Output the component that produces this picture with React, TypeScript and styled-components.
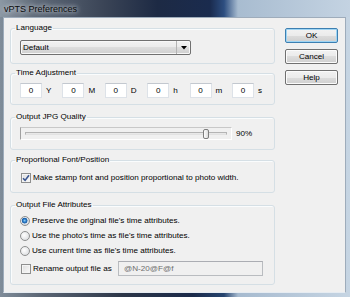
import React from 'react'
import styled, { createGlobalStyle } from 'styled-components'

const GlobalStyle = createGlobalStyle`
  html, body {
    margin: 0;
    padding: 0;
    background: #1e2a3a;
  }
  * {
    box-sizing: border-box;
  }
`

const Window = styled.div`
  width: 350px;
  height: 297px;
  display: flex;
  flex-direction: column;
  overflow: hidden;
  font-family: "Liberation Sans", Arial, sans-serif;
  font-size: 8.1px;
  color: #000;
  background: linear-gradient(to right, #7f8c99 0%, #5a6574 12%, #2c3648 35%, #1b2a4a 55%, #26446f 64%, #a6bacf 68%, #c6d5e3 100%);
`

const TitleBar = styled.div`
  height: 17px;
  flex: none;
  display: flex;
  align-items: center;
  padding-left: 4px;
  background: linear-gradient(to right, #8c98a4 0%, #5f6a78 10%, #3a4456 30%, #1d2a44 45%, #1a2b4e 60%, #2d4e80 64%, #a8bcd0 68%, #c4d3e2 100%);
`

const TitleText = styled.span`
  font-size: 9px;
  color: #0a0a0a;
  text-shadow: 0 0 4px #d0d6de, 0 0 6px #c2cad4;
`

const Frame = styled.div`
  flex: 1;
  display: flex;
  padding: 0 4px 4px 3px;
`

const Client = styled.div`
  flex: 1;
  display: flex;
  align-items: flex-start;
  gap: 10px;
  padding: 4px 7px 0 6px;
  background: #f0f0f0;
  border: 1px solid #9eacbb;
  border-bottom-color: #e6ecf2;
`

const Groups = styled.div`
  width: 265px;
  display: flex;
  flex-direction: column;
`

const Group = styled.fieldset<{ $mt?: number; $pt: number; $pb: number }>`
  margin: ${({ $mt = 0 }) => $mt}px 0 0 0;
  padding: ${({ $pt }) => $pt}px 8px ${({ $pb }) => $pb}px 9px;
  border: 1px solid #d5dfe5;
  border-radius: 3px;
  min-width: 0;
  box-shadow: inset 1px 1px 0 #fafcfd;
`

const Legend = styled.legend`
  margin-left: -5px;
  padding: 0 1px;
  line-height: 12px;
  color: #000;
`

const Combo = styled.div`
  width: 171px;
  height: 15px;
  display: flex;
  align-items: center;
  border: 1px solid #707070;
  border-radius: 2px;
  background: linear-gradient(#f2f2f2 0%, #ebebeb 50%, #dddddd 50%, #cfcfcf 100%);
  box-shadow: inset 0 0 0 1px #f8f8f8;
`

const ComboText = styled.span`
  flex: 1;
  padding-left: 2px;
`

const ComboArrow = styled.span`
  width: 14px;
  align-self: stretch;
  display: flex;
  align-items: center;
  justify-content: center;
  border-left: 1px solid #b4b4b4;
`

const TimeRow = styled.div`
  display: grid;
  grid-template-columns: repeat(6, 42.4px);
`

const TimeUnit = styled.div`
  display: flex;
  align-items: center;
  gap: 4px;
`

const NumBox = styled.span`
  width: 22px;
  height: 15px;
  line-height: 13px;
  text-align: center;
  background: #fff;
  border: 1px solid #dde2e8;
  border-top-color: #c3c8cf;
`

const SliderRow = styled.div`
  display: flex;
  align-items: center;
  gap: 4px;
`

const SliderFrame = styled.div`
  width: 212px;
  height: 13px;
  display: flex;
  align-items: center;
  padding: 0 4px;
  border: 1px solid;
  border-color: #c8c8c8 #ffffff #ffffff #a0a0a0;
`

const Track = styled.div`
  position: relative;
  flex: 1;
  height: 3px;
  border: 1px solid #b4b4b4;
  border-bottom-color: #e2e2e2;
  background: #e8e8e8;
`

const Thumb = styled.div`
  position: absolute;
  top: 50%;
  width: 6px;
  height: 10px;
  transform: translate(-50%, -50%);
  border: 1px solid #7d7d7d;
  border-radius: 2px;
  background: linear-gradient(to right, #fdfdfd, #dcdcdc);
`

const OptionRow = styled.div<{ $h?: number }>`
  height: ${({ $h = 15 }) => $h}px;
  display: flex;
  align-items: center;
  gap: 2px;
`

const CheckBox = styled.span`
  width: 10px;
  height: 10px;
  margin-left: 1px;
  display: flex;
  align-items: center;
  justify-content: center;
  border: 1px solid #8e8f8f;
  background: linear-gradient(135deg, #dcdcdc, #fbfbfb);
  box-shadow: inset 0 0 0 1px #f4f4f4;
`

const Radio = styled.span<{ $on?: boolean }>`
  width: 10px;
  height: 10px;
  border-radius: 50%;
  border: 1px solid #8e8f8f;
  background: ${({ $on }) =>
    $on
      ? 'radial-gradient(circle at 45% 45%, #8fd0f8 0, #2d7fc9 1.5px, #1c5aa2 2.6px, #e8eef4 3.2px, #d6dadf 4px)'
      : 'radial-gradient(circle at 40% 40%, #ffffff, #d4d6d9)'};
`

const OptionList = styled.div`
  display: flex;
  flex-direction: column;
`

const RenameRow = styled.div`
  margin-top: 3px;
  height: 15px;
  display: flex;
  align-items: center;
`

const Rename = styled.div`
  display: flex;
  align-items: center;
  gap: 2px;
  width: 98px;
`

const DisabledField = styled.span`
  width: 145px;
  height: 15px;
  line-height: 13px;
  padding-left: 5px;
  color: #6d6d6d;
  background: #f0f0f0;
  border: 1px solid #b9bcc0;
  border-top-color: #abadb3;
`

const Buttons = styled.div`
  width: 53px;
  margin-top: 6px;
  display: flex;
  flex-direction: column;
  gap: 6px;
`

const Button = styled.button<{ $default?: boolean }>`
  width: 53px;
  height: 15px;
  padding: 0;
  font: inherit;
  color: #000;
  border: 1px solid ${({ $default }) => ($default ? '#3c7fb1' : '#707070')};
  border-radius: 2px;
  background: linear-gradient(#f2f2f2 0%, #ebebeb 50%, #dddddd 50%, #cfcfcf 100%);
  box-shadow: inset 0 0 0 1px ${({ $default }) => ($default ? '#9fd5f4' : '#fbfbfb')};
`

const Check = () => (
  <svg width="8" height="8" viewBox="0 0 8 8">
    <path d="M1 4.3 L3.1 6.4 L7 1.2" stroke="#3a5590" strokeWidth="1.6" fill="none" />
  </svg>
)

const DownArrow = () => (
  <svg width="6" height="4" viewBox="0 0 6 4">
    <path d="M0 0 H6 L3 3.5 Z" fill="#000" />
  </svg>
)

const timeUnits = ['Y', 'M', 'D', 'h', 'm', 's']
const quality = 90

export default function App() {
  return (
    <Window>
      <GlobalStyle />
      <TitleBar>
        <TitleText>vPTS Preferences</TitleText>
      </TitleBar>
      <Frame>
        <Client>
          <Groups>
            <Group $pt={6} $pb={8}>
              <Legend>Language</Legend>
              <Combo>
                <ComboText>Default</ComboText>
                <ComboArrow>
                  <DownArrow />
                </ComboArrow>
              </Combo>
            </Group>

            <Group $mt={3} $pt={4} $pb={6}>
              <Legend>Time Adjustment</Legend>
              <TimeRow>
                {timeUnits.map((u) => (
                  <TimeUnit key={u}>
                    <NumBox>0</NumBox>
                    <span>{u}</span>
                  </TimeUnit>
                ))}
              </TimeRow>
            </Group>

            <Group $mt={6} $pt={4} $pb={9}>
              <Legend>Output JPG Quality</Legend>
              <SliderRow>
                <SliderFrame>
                  <Track>
                    <Thumb style={{ left: `${quality}%` }} />
                  </Track>
                </SliderFrame>
                <span>{quality}%</span>
              </SliderRow>
            </Group>

            <Group $mt={4} $pt={5} $pb={8}>
              <Legend>Proportional Font/Position</Legend>
              <OptionRow $h={13}>
                <CheckBox>
                  <Check />
                </CheckBox>
                <span>Make stamp font and position proportional to photo width.</span>
              </OptionRow>
            </Group>

            <Group $mt={6} $pt={2} $pb={8}>
              <Legend>Output File Attributes</Legend>
              <OptionList>
                <OptionRow>
                  <Radio $on />
                  <span>Preserve the original file's time attributes.</span>
                </OptionRow>
                <OptionRow>
                  <Radio />
                  <span>Use the photo's time as file's time attributes.</span>
                </OptionRow>
                <OptionRow>
                  <Radio />
                  <span>Use current time as file's time attributes.</span>
                </OptionRow>
              </OptionList>
              <RenameRow>
                <Rename>
                  <CheckBox />
                  <span>Rename output file as</span>
                </Rename>
                <DisabledField>@N-20@F@f</DisabledField>
              </RenameRow>
            </Group>
          </Groups>

          <Buttons>
            <Button $default>OK</Button>
            <Button>Cancel</Button>
            <Button>Help</Button>
          </Buttons>
        </Client>
      </Frame>
    </Window>
  )
}
